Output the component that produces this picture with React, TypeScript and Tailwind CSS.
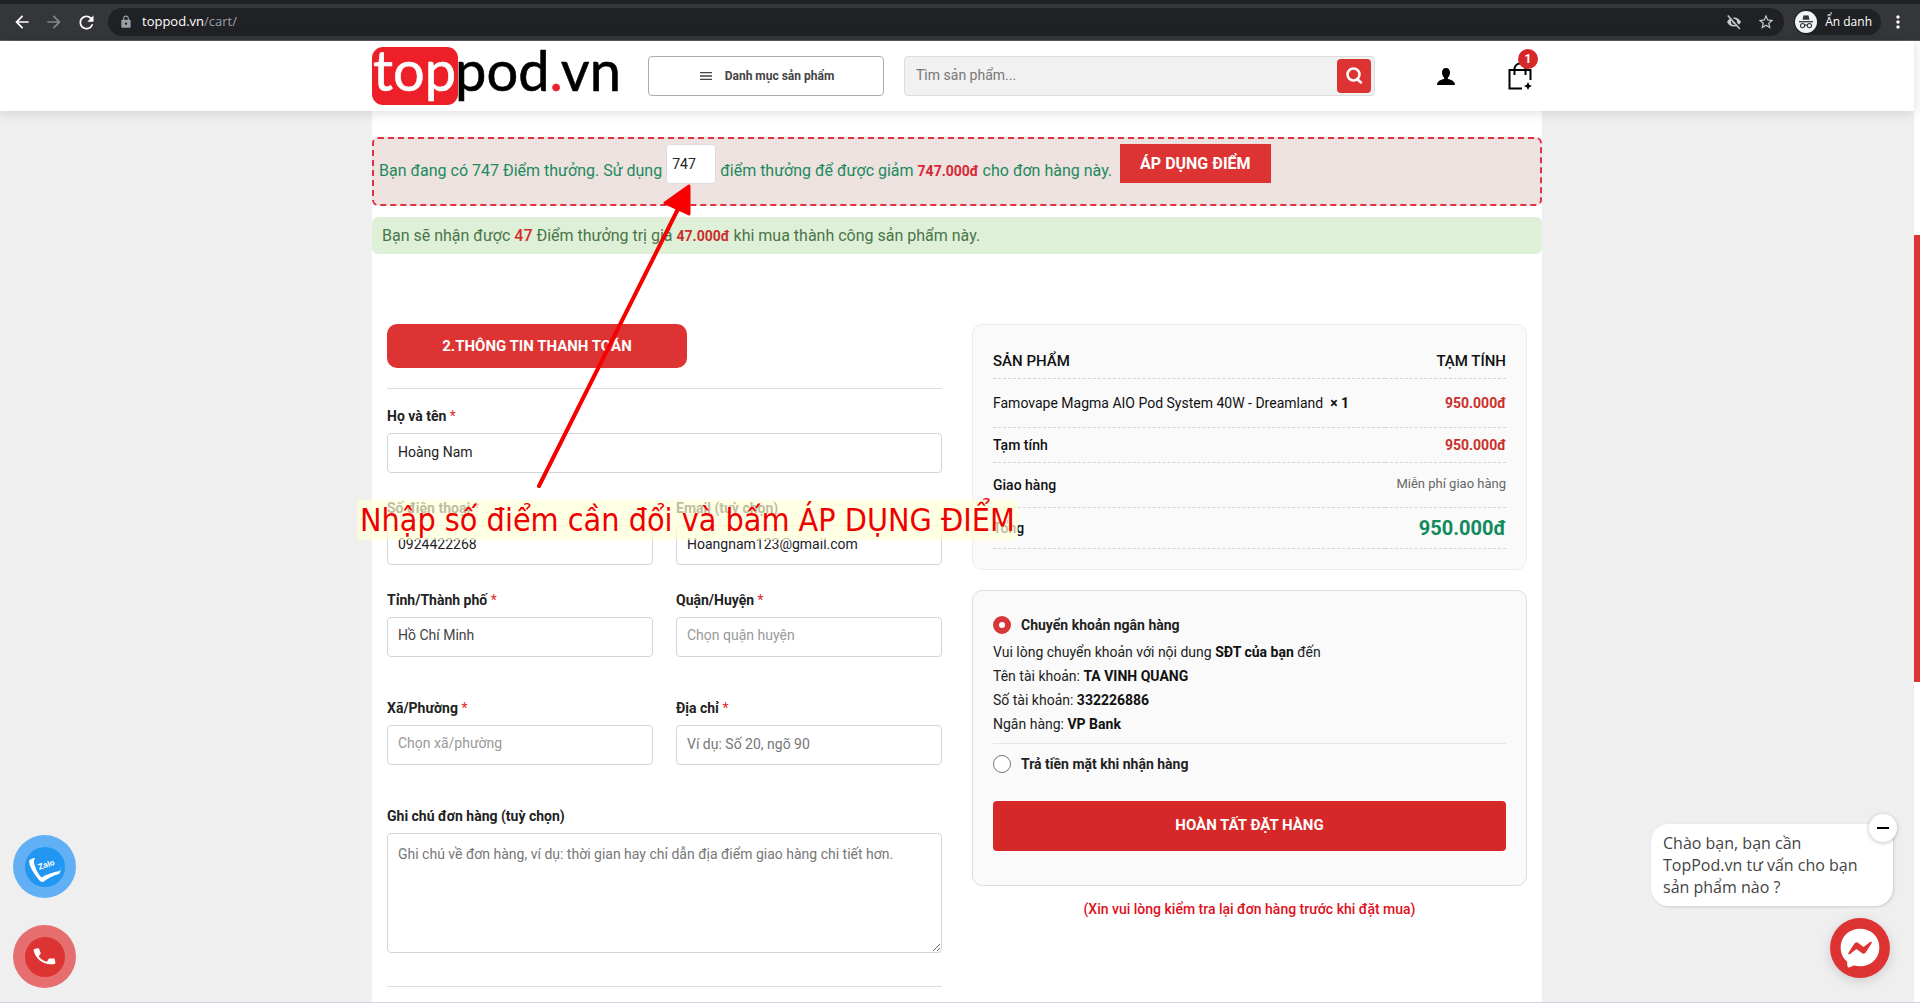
import { FaFacebookMessenger } from "react-icons/fa6"
import {
  MdArrowBack,
  MdArrowForward,
  MdLock,
  MdMenu,
  MdMoreVert,
  MdPhone,
  MdRefresh,
  MdStarBorder,
} from "react-icons/md"

const inputClass =
  "block w-full h-10 px-[10px] pb-[2px] rounded border border-[#d5d5d5] bg-white text-sm text-[#222] placeholder:text-[#777] outline-none"
const selectClass =
  "block w-full h-10 px-[10px] pb-1 rounded border border-[#d5d5d5] bg-white text-sm appearance-none outline-none"

function BrowserBar() {
  return (
    <div className="shrink-0 bg-[#35363a] border-t-4 border-t-[#202124] border-b border-b-[#5a5b5e] font-['Open_Sans',sans-serif]">
      <div className="flex items-center h-9 px-3">
        <button aria-label="Back" className="w-5 mr-3 text-white">
          <MdArrowBack size={20} />
        </button>
        <button aria-label="Forward" className="w-5 mr-3 text-[#85878a]">
          <MdArrowForward size={20} />
        </button>
        <button aria-label="Reload" className="w-5 mr-3 text-white">
          <MdRefresh size={21} />
        </button>
        <div className="flex items-center flex-1 h-7 rounded-full bg-[#202124] pl-[11px] pr-[9px] text-[13px]">
          <MdLock size={14} className="mr-[9px] text-[#9aa0a6]" />
          <span className="text-white">toppod.vn</span>
          <span className="text-[#9aa0a6]">/cart/</span>
          <div className="flex items-center gap-[15px] ml-auto text-[#c8cacd]">
            <svg width="16" height="16" viewBox="0 0 16 16" fill="none">
              <path d="M1 8c1.6-3 4-4.6 7-4.6S13.400 5 15 8c-1.600 3-4 4.600-7 4.600S2.600 11 1 8z" fill="currentColor" />
              <circle cx="8" cy="8" r="3" fill="#202124" />
              <circle cx="8" cy="8" r="1.600" fill="currentColor" />
              <path d="M3.500 1.200l11 13" stroke="#202124" strokeWidth="2" />
              <path d="M1.800 1.400l12 13.600" stroke="currentColor" strokeWidth="1.500" />
            </svg>
            <MdStarBorder size={18} />
          </div>
        </div>
        <button className="flex items-center h-[26px] ml-[10px] pl-[1px] pr-[9px] rounded-full bg-[#202124] text-white text-xs">
          <svg width="22" height="22" viewBox="0 0 22 22" className="mr-2">
            <circle cx="11" cy="11" r="11" fill="#f1f3f4" />
            <path d="M7.500 8.800l.9-4q.2-.8 1-.6 1.600.5 3.200 0 .8-.2 1 .6l.9 4z" fill="#35363a" />
            <path d="M4 10.700h14" stroke="#35363a" strokeWidth="1.300" />
            <g fill="none" stroke="#35363a" strokeWidth="1.100">
              <circle cx="7.600" cy="14.600" r="2.100" />
              <circle cx="14.400" cy="14.600" r="2.100" />
              <path d="M9.700 14.300q1.300-.8 2.600 0" />
            </g>
          </svg>
          Ẩn danh
        </button>
        <button aria-label="Menu" className="ml-[7px] text-white">
          <MdMoreVert size={20} />
        </button>
      </div>
    </div>
  )
}

function Logo() {
  return (
    <a href="#" aria-label="toppod.vn" className="shrink-0">
      <svg width="250" height="88" viewBox="0 0 250 88">
        <rect y="15" width="86" height="58" rx="11" fill="#ed1f29" />
        <g fontFamily="Lato, sans-serif" fontSize="56" strokeWidth="0.6">
          <text x="1" y="59" fill="#fff" stroke="#fff">top</text>
          <text x="83" y="59" fill="#000" stroke="#000">
            pod<tspan fill="#ed1f29" stroke="#ed1f29">.</tspan>vn
          </text>
        </g>
      </svg>
    </a>
  )
}

function SiteHeader() {
  return (
    <header className="relative z-10 shrink-0 bg-white shadow-[0_1px_12px_rgba(0,0,0,0.15)]">
      <div className="flex items-center max-w-[1170px] h-[70px] mx-auto">
        <Logo />
        <button className="flex items-center justify-center gap-[11px] w-[236px] h-10 ml-[26px] rounded border border-[#aaa] text-xs font-bold text-[#444]">
          <MdMenu size={16} />
          Danh mục sản phẩm
        </button>
        <form className="flex items-center flex-1 h-10 ml-5 pr-[3px] rounded border border-[#ddd] bg-[#f1f1f1]">
          <input
            type="search"
            aria-label="Tìm sản phẩm"
            placeholder="Tìm sản phẩm..."
            className="flex-1 h-full pl-[11px] pb-[2px] bg-transparent text-sm placeholder:text-[#777] outline-none"
          />
          <button type="button" aria-label="Tìm" className="flex items-center justify-center w-[34px] h-[34px] rounded bg-[#dd3333] text-white">
            <svg width="18" height="18" viewBox="0 0 18 18" fill="none" stroke="currentColor" strokeWidth="2.500">
              <circle cx="8.500" cy="7.500" r="6" />
              <path d="M12 12l4 3.500" strokeLinecap="round" />
            </svg>
          </button>
        </form>
        <a href="#" aria-label="Tài khoản" className="ml-[62px] mr-[53px]">
          <svg width="18" height="17" viewBox="0 0 18 17">
            <path d="M9 0c2.600 0 4 1.800 4 4.500 0 2.200-.9 4.200-2.100 5.100v1.500c3.600.7 7 2.300 7.100 5.900H0c.1-3.600 3.500-5.200 7.100-5.900V9.600C5.900 8.700 5 6.700 5 4.500 5 1.800 6.400 0 9 0z" />
          </svg>
        </a>
        <a href="#" aria-label="Giỏ hàng" className="relative mr-[10px]">
          <svg width="24" height="28" viewBox="0 0 24 28" fill="none" stroke="#000" strokeWidth="2">
            <path d="M22.500 18V8H1.500v18.500H14" />
            <path d="M6.500 13V7a5.500 5.500 0 0 1 11 0v6" />
            <path d="M20 20l1.300 2.700L24 24l-2.700 1.300L20 28l-1.300-2.700L16 24l2.700-1.300z" fill="#000" stroke="none" />
          </svg>
          <span className="absolute -top-[13px] left-[10px] w-5 h-5 rounded-full bg-[#d62828] text-center text-xs leading-5 font-bold text-white">
            1
          </span>
        </a>
      </div>
    </header>
  )
}

function PointsNotice() {
  return (
    <>
      <div className="flex items-start pt-[5px] pb-[6px] px-[5px] rounded-md border-2 border-dashed border-[#dd3340] bg-[#eee2e1] text-base leading-[54px] text-[#1c8a5c]">
        <label htmlFor="points">Bạn đang có 747 Điểm thưởng. Sử dụng</label>
        <input id="points" defaultValue="747" className="w-[50px] h-10 mx-1 px-[5px] rounded border border-[#ddd] bg-white text-sm text-[#222] outline-none" />
        <span>
          điểm thưởng để được giảm <b className="text-sm text-[#d62834]">747.000đ</b> cho đơn hàng này.
        </span>
        <button className="h-[39px] ml-2 px-5 bg-[#dd3333] text-base leading-[39px] font-bold text-white">ÁP DỤNG ĐIỂM</button>
      </div>
      <p className="mt-[11px] px-[10px] rounded-md bg-[#dff0d8] leading-[37px] text-base text-[#4a7548]">
        Bạn sẽ nhận được <b className="font-medium text-[#d62828]">47</b> Điểm thưởng trị giá{" "}
        <b className="text-sm text-[#c9302c]">47.000đ</b> khi mua thành công sản phẩm này.
      </p>
    </>
  )
}

function FieldLabel({ id, text, required = false }: { id: string; text: string; required?: boolean }) {
  return (
    <label htmlFor={id} className="block mb-[5px] text-sm leading-6 font-bold text-[#222]">
      {text}
      {required && <span className="font-normal text-[#e02b2b]"> *</span>}
    </label>
  )
}

function BillingForm() {
  return (
    <form>
      <h2 className="w-[300px] mb-5 rounded-[10px] bg-[#dd3333] text-center text-[15px] leading-[44px] font-bold text-white">
        2.THÔNG TIN THANH TOÁN
      </h2>
      <hr className="mb-[15px] border-[#ddd]" />

      <FieldLabel id="name" text="Họ và tên" required />
      <input id="name" defaultValue="Hoàng Nam" className={inputClass} />

      <div className="grid grid-cols-2 gap-x-[23px] mt-[23px]">
        <div>
          <FieldLabel id="phone" text="Số điện thoại" required />
          <input id="phone" defaultValue="0924422268" className={inputClass} />
        </div>
        <div>
          <FieldLabel id="email" text="Email (tuỳ chọn)" />
          <input id="email" defaultValue="Hoangnam123@gmail.com" className={inputClass} />
        </div>
      </div>

      <div className="grid grid-cols-2 gap-x-[23px] mt-[23px]">
        <div>
          <FieldLabel id="city" text="Tỉnh/Thành phố" required />
          <select id="city" className={`${selectClass} text-[#444]`}>
            <option>Hồ Chí Minh</option>
          </select>
        </div>
        <div>
          <FieldLabel id="district" text="Quận/Huyện" required />
          <select id="district" className={`${selectClass} text-[#999]`}>
            <option>Chọn quận huyện</option>
          </select>
        </div>
      </div>

      <div className="grid grid-cols-2 gap-x-[23px] mt-[39px]">
        <div>
          <FieldLabel id="ward" text="Xã/Phường" required />
          <select id="ward" className={`${selectClass} text-[#999]`}>
            <option>Chọn xã/phường</option>
          </select>
        </div>
        <div>
          <FieldLabel id="address" text="Địa chỉ" required />
          <input id="address" placeholder="Ví dụ: Số 20, ngõ 90" className={inputClass} />
        </div>
      </div>

      <div className="mt-[39px]">
        <FieldLabel id="note" text="Ghi chú đơn hàng (tuỳ chọn)" />
        <textarea
          id="note"
          placeholder="Ghi chú về đơn hàng, ví dụ: thời gian hay chỉ dẫn địa điểm giao hàng chi tiết hơn."
          className="block w-full h-[120px] p-[10px] rounded border border-[#d5d5d5] bg-white text-sm placeholder:text-[#777] outline-none"
        />
      </div>
      <hr className="mt-[33px] border-[#ddd]" />
    </form>
  )
}

function OrderSummary() {
  return (
    <div className="p-5 rounded-[10px] border border-[#ececec] bg-[#fafafa]">
      <table className="w-full text-sm text-[#111]">
        <thead>
          <tr className="h-[33px] border-b border-dashed border-[#d5d5d5] text-[15px]">
            <th className="text-left font-medium">SẢN PHẨM</th>
            <th className="text-right font-medium">TẠM TÍNH</th>
          </tr>
        </thead>
        <tbody>
          <tr className="h-[49px] border-b border-dashed border-[#d5d5d5]">
            <td>
              Famovape Magma AIO Pod System 40W - Dreamland&nbsp; <b>× 1</b>
            </td>
            <td className="text-right font-bold text-[#c9302c]">950.000đ</td>
          </tr>
          <tr className="h-[35px] border-b border-dashed border-[#d5d5d5]">
            <th className="text-left font-medium">Tạm tính</th>
            <td className="text-right font-bold text-[#c9302c]">950.000đ</td>
          </tr>
          <tr className="h-[45px] border-b border-dashed border-[#d5d5d5]">
            <th className="text-left font-medium">Giao hàng</th>
            <td className="text-right text-[13px] text-[#666]">Miễn phí giao hàng</td>
          </tr>
          <tr className="h-[41px] border-b border-dashed border-[#d5d5d5]">
            <th className="text-left font-medium">Tổng</th>
            <td className="text-right text-xl font-bold text-[#118a5c]">950.000đ</td>
          </tr>
        </tbody>
      </table>
    </div>
  )
}

function PaymentBox() {
  return (
    <div className="mt-5 pt-5 pb-[34px] px-5 rounded-[10px] border border-[#ddd] bg-[#fafafa] text-sm text-[#222]">
      <label className="flex items-center gap-[10px] h-7 font-bold">
        <input type="radio" name="payment" defaultChecked className="appearance-none w-[18px] h-[18px] rounded-full border-[6px] border-[#d63638] bg-white" />
        Chuyển khoản ngân hàng
      </label>
      <div className="pt-[1px] pb-[7px] leading-6 border-b border-[#e6e6e6]">
        <p>Vui lòng chuyển khoản với nội dung <b className="text-[#111]">SĐT của bạn</b> đến</p>
        <p>Tên tài khoản: <b className="text-[#111]">TA VINH QUANG</b></p>
        <p>Số tài khoản: <b className="text-[#111]">332226886</b></p>
        <p>Ngân hàng: <b className="text-[#111]">VP Bank</b></p>
      </div>
      <label className="flex items-center gap-[10px] h-7 mt-[6px] font-bold">
        <input type="radio" name="payment" className="appearance-none w-[18px] h-[18px] rounded-full border border-[#777] bg-white" />
        Trả tiền mặt khi nhận hàng
      </label>
      <button className="w-full h-[50px] mt-[23px] rounded bg-[#d62828] text-[15px] font-bold text-white">HOÀN TẤT ĐẶT HÀNG</button>
    </div>
  )
}

// Hint drawn over the form: arrow to the points box plus caption
function Annotation() {
  return (
    <div className="absolute inset-0 pointer-events-none">
      <svg width="160" height="310" className="absolute left-[163px] top-[70px]">
        <path d="M4 305L145 24" stroke="#f60000" strokeWidth="4" strokeLinecap="round" />
        <path d="M154 5L130 22L154 33Z" fill="#f60000" stroke="#f60000" strokeWidth="3" strokeLinejoin="round" />
      </svg>
      <p className="absolute -left-[15px] top-[389px] px-[3px] bg-[#ffffd9]/70 whitespace-nowrap font-['DejaVu_Sans_Condensed','DejaVu_Sans',sans-serif] text-[32px] leading-10 text-[#ee0000]">
        Nhập số điểm cần đổi và bấm ÁP DỤNG ĐIỂM
      </p>
    </div>
  )
}

function ContactButtons() {
  return (
    <div className="absolute left-[13px] bottom-[14px] flex flex-col gap-[27px]">
      <a href="#" aria-label="Zalo" className="flex items-center justify-center w-[63px] h-[63px] rounded-full bg-[#61b0f5]">
        <svg width="40" height="40" viewBox="0 0 40 40">
          <circle cx="20" cy="20" r="20" fill="#2196f3" />
          <path d="M4 13.500q3-3 6-2.500-2 3 0 8 1.500 6 6.500 11.500 6-4 18-6.500Q37 21 36 20q0 5-2 7-8 2-16 8-2.500 0-4-2Q4 21 4 13.500z" fill="#fff" />
          <text x="14" y="23" transform="rotate(-18 14 23)" fontFamily="Inter, sans-serif" fontSize="8" fontWeight="700" fill="#fff">
            Zalo
          </text>
        </svg>
      </a>
      <a href="#" aria-label="Gọi điện" className="flex items-center justify-center w-[63px] h-[63px] rounded-full bg-[#e66e6e]">
        <span className="flex items-center justify-center w-10 h-10 rounded-full bg-[#dd3333] text-white">
          <MdPhone size={25} className="-rotate-12" />
        </span>
      </a>
    </div>
  )
}

function ChatWidget() {
  return (
    <div className="absolute right-[21px] bottom-6 flex flex-col items-end font-['Open_Sans',sans-serif]">
      <div className="relative w-[242px] py-2 px-3 rounded-[18px] bg-white text-base leading-[22px] text-[#444] shadow-[1px_1px_3px_rgba(0,0,0,0.15)]">
        Chào bạn, bạn cần<br />TopPod.vn tư vấn cho bạn<br />sản phẩm nào ?
        <button aria-label="Thu nhỏ" className="absolute -top-[10px] -right-[4px] flex items-center justify-center w-7 h-7 rounded-full bg-white shadow-[0_1px_4px_rgba(0,0,0,0.25)]">
          <span className="w-3 h-[2px] bg-black" />
        </button>
      </div>
      <button aria-label="Messenger" className="flex items-center justify-center w-[60px] h-[60px] mt-3 mr-[3px] rounded-full bg-[#dd3333] text-white shadow-[0_3px_12px_rgba(0,0,0,0.15)]">
        <FaFacebookMessenger size={40} />
      </button>
    </div>
  )
}

export default function App() {
  return (
    <div className="flex flex-col h-screen overflow-hidden font-[Roboto,sans-serif] text-[#222]">
      <BrowserBar />
      <div className="flex flex-1 min-h-0 border-b border-[#cfd5e3]">
        <div className="relative flex flex-col flex-1 min-w-0 bg-[#efefef]">
          <SiteHeader />
          <main className="flex-1 min-h-0 overflow-hidden">
            <div className="relative max-w-[1170px] min-h-full mx-auto pt-[26px] bg-white">
              <PointsNotice />
              <div className="grid grid-cols-2 gap-[30px] mt-[70px] px-[15px]">
                <BillingForm />
                <div>
                  <OrderSummary />
                  <PaymentBox />
                  <p className="mt-[11px] text-center text-sm leading-6 font-medium text-[#e01020]">
                    (Xin vui lòng kiểm tra lại đơn hàng trước khi đặt mua)
                  </p>
                </div>
              </div>
              <Annotation />
            </div>
          </main>
          <ContactButtons />
          <ChatWidget />
        </div>
        {/* Scrollbar */}
        <div className="w-[6px] pt-[194px] bg-white">
          <div className="h-[447px] bg-[#dd3333]" />
        </div>
      </div>
    </div>
  )
}
